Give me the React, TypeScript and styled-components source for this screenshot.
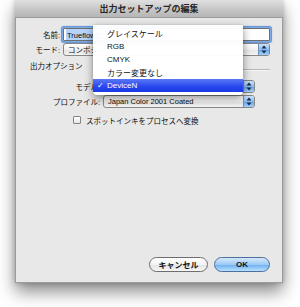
import React, { FC } from 'react'
import styled, { createGlobalStyle } from 'styled-components'

const GlobalStyle = createGlobalStyle`
  html, body {
    margin: 0;
    padding: 0;
    background: #ffffff;
  }
  body {
    font-family: "Liberation Sans", "Noto Sans CJK JP", sans-serif;
    font-size: 7.5px;
    color: #0c0c0c;
  }
`

const menuItems = ['グレイスケール', 'RGB', 'CMYK', 'カラー変更なし', 'DeviceN']
const selectedItem = 'DeviceN'

const PopupArrows: FC = () => (
  <svg width="6" height="9" viewBox="0 0 6 9">
    <path d="M3 0.5 L5.5 3.5 L0.5 3.5 Z" fill="#1a2a44" />
    <path d="M3 8.5 L5.5 5.5 L0.5 5.5 Z" fill="#1a2a44" />
  </svg>
)

const Popup: FC<{ value: string }> = ({ value }) => (
  <PopupBox>
    <PopupText>{value}</PopupText>
    <PopupCap>
      <PopupArrows />
    </PopupCap>
  </PopupBox>
)

export default function App() {
  return (
    <>
      <GlobalStyle />
      <Page>
        <Window>
          <TitleBar>出力セットアップの編集</TitleBar>
          <Body>
            <Row top={10}>
              <Label width={44}>名前:</Label>
              <TextField>
                <Selected>Trueflow出力</Selected>
              </TextField>
            </Row>
            <Row top={2}>
              <Label width={44}>モード:</Label>
              <Popup value="コンポジット" />
            </Row>
            <SectionRow>
              <SectionLabel>出力オプション</SectionLabel>
              <Separator />
            </SectionRow>
            <Row top={8} right={15}>
              <Label width={84}>モデル:</Label>
              <Popup value="" />
            </Row>
            <Row top={2} right={15}>
              <Label width={84}>プロファイル:</Label>
              <Popup value="Japan Color 2001 Coated" />
            </Row>
            <CheckRow>
              <CheckBox />
              <span>スポットインキをプロセスへ変換</span>
            </CheckRow>
            <Spacer />
            <ButtonRow>
              <PushButton>キャンセル</PushButton>
              <PushButton primary>OK</PushButton>
            </ButtonRow>
          </Body>

          {/* open popup menu of the モデル popup */}
          <Menu>
            {menuItems.map(item => (
              <MenuItem key={item} active={item === selectedItem}>
                <Check>{item === selectedItem ? '✓' : ''}</Check>
                {item}
              </MenuItem>
            ))}
          </Menu>
        </Window>
      </Page>
    </>
  )
}

const Page = styled.div`
  padding: 0 0 24px 15px;
`

const Window = styled.div`
  position: relative;
  width: 268px;
  height: 283px;
  display: flex;
  flex-direction: column;
  box-shadow: 0 9px 16px rgba(0, 0, 0, 0.45), 0 0 5px rgba(0, 0, 0, 0.22);
`

const TitleBar = styled.div`
  height: 18px;
  flex: none;
  display: flex;
  align-items: center;
  justify-content: center;
  background: linear-gradient(#e0e0e0, #c4c4c4 60%, #b6b6b6);
  border-bottom: 1px solid #9a9a9a;
  box-sizing: border-box;
  font-size: 9px;
  font-weight: bold;
  color: #262626;
`

const Body = styled.div`
  flex: 1;
  display: flex;
  flex-direction: column;
  background: #e8e8e8;
  border: 1px solid #9c9c9c;
  border-top: none;
  padding: 0 12px 0 0;
`

const Row = styled.div<{ top: number; right?: number }>`
  display: flex;
  align-items: center;
  gap: 3px;
  margin-top: ${p => p.top}px;
  padding-right: ${p => p.right || 0}px;
  height: 13px;
`

const Label = styled.div<{ width: number }>`
  width: ${p => p.width}px;
  flex: none;
  text-align: right;
  white-space: nowrap;
`

const TextField = styled.div`
  flex: 1;
  height: 13px;
  box-sizing: border-box;
  background: #ffffff;
  border: 1px solid #6f6f6f;
  border-radius: 1px;
  box-shadow: 0 0 0 1px #7eaae4, 0 0 1px 2px #5a90d6;
  display: flex;
  align-items: center;
  padding-left: 2px;
  overflow: hidden;
`

const Selected = styled.span`
  background: #b5d3fb;
  padding: 0 1px;
  white-space: nowrap;
`

const PopupBox = styled.div`
  flex: 1;
  height: 13px;
  box-sizing: border-box;
  display: flex;
  align-items: stretch;
  border: 1px solid #878787;
  border-radius: 3px;
  background: linear-gradient(#ffffff, #f2f2f2 50%, #e4e4e4 51%, #f4f4f4);
  overflow: hidden;
`

const PopupText = styled.div`
  flex: 1;
  display: flex;
  align-items: center;
  padding-left: 4px;
  white-space: nowrap;
  overflow: hidden;
`

const PopupCap = styled.div`
  width: 10px;
  display: flex;
  align-items: center;
  justify-content: center;
  border-left: 1px solid #6f8fb8;
  background: linear-gradient(#c9e1fb, #8cbdf2 50%, #5fa0ea 51%, #a6d0fa);
`

const SectionRow = styled.div`
  display: flex;
  align-items: flex-end;
  gap: 14px;
  margin-top: 6px;
  padding-left: 14px;
  height: 10px;
`

const SectionLabel = styled.div`
  white-space: nowrap;
  line-height: 10px;
`

const Separator = styled.div`
  flex: 1;
  height: 1px;
  margin-bottom: 1px;
  background: #b8b8b8;
  border-bottom: 1px solid #f6f6f6;
`

const CheckRow = styled.div`
  display: flex;
  align-items: center;
  gap: 5px;
  margin-top: 7px;
  padding-left: 57px;
  height: 10px;
`

const CheckBox = styled.div`
  width: 8px;
  height: 8px;
  box-sizing: border-box;
  border: 1px solid #858585;
  border-radius: 1px;
  background: linear-gradient(#ffffff, #e4e4e4);
`

const Spacer = styled.div`
  flex: 1;
`

const ButtonRow = styled.div`
  display: flex;
  justify-content: flex-end;
  gap: 6px;
  padding-bottom: 10px;
`

const PushButton = styled.div<{ primary?: boolean }>`
  height: 15px;
  width: ${p => (p.primary ? 56 : 59)}px;
  box-sizing: border-box;
  display: flex;
  align-items: center;
  justify-content: center;
  border-radius: 8px;
  border: 1px solid ${p => (p.primary ? '#4d6f9c' : '#6e6e6e')};
  font-weight: bold;
  font-size: 8px;
  color: #111;
  background: ${p =>
    p.primary
      ? 'linear-gradient(#d4e8fc, #9fcaf5 50%, #6aaeef 51%, #b9e0ff)'
      : 'linear-gradient(#ffffff, #f3f3f3 50%, #e2e2e2 51%, #f6f6f6)'};
`

const Menu = styled.div`
  position: absolute;
  left: 78px;
  top: 25px;
  width: 150px;
  padding: 2px 0 3px;
  box-sizing: border-box;
  background: rgba(255, 255, 255, 0.97);
  border-radius: 0 0 4px 4px;
  box-shadow: 0 3px 8px rgba(0, 0, 0, 0.45), 0 0 1px rgba(0, 0, 0, 0.35);
  font-size: 8px;
`

const MenuItem = styled.div<{ active?: boolean }>`
  height: 13px;
  display: flex;
  align-items: center;
  padding-left: 4px;
  white-space: nowrap;
  color: ${p => (p.active ? '#ffffff' : '#141414')};
  background: ${p =>
    p.active ? 'linear-gradient(#5a78f6, #2746ee 60%, #1b3ae6)' : 'transparent'};
`

const Check = styled.span`
  width: 10px;
  flex: none;
  font-family: "DejaVu Sans", sans-serif;
  font-size: 8px;
`
